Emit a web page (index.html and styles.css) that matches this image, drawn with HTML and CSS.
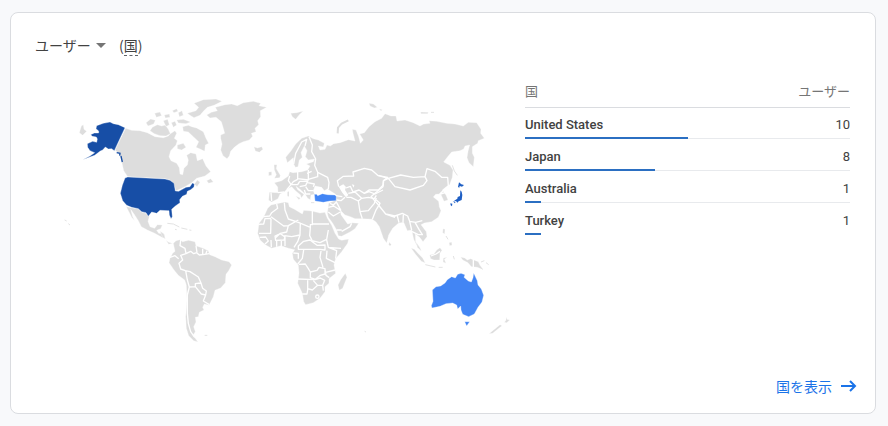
FILE: index.html
```
<!DOCTYPE html>
<html lang="ja">
<head>
    <meta charset="utf-8">
    <title>ユーザー（国）</title>
    <link rel="stylesheet" href="styles.css">
</head>
<body>
<main class="card">
    <header class="card-header">
        <span class="metric">
            <select class="metric-select" aria-label="ユーザー">
                <option>ユーザー</option>
            </select>
            <svg class="caret" viewBox="0 0 10 5" aria-hidden="true"><path d="M0 0h10L5 5z"/></svg>
        </span>
        <h1 class="dimension">(<span class="dimension-name">国</span>)</h1>
    </header>

    <div class="content">
        <svg class="map" viewBox="180 270 1380 780" aria-hidden="true">
            <!-- North America -->
            <g transform="translate(180 270)">
                <path class="land" d="M197 115L215 121 240 122 262 128 285 140 310 143 325 138 330 132 345 122 350 130 343 145 352 152 348 165 332 182 327 200 333 212 350 220 358 233 360 252 368 254 372 235 382 225 385 210 380 196 392 188 408 192 412 212 428 206 438 228 452 245 435 258 410 265 395 278 375 290 347 303 343 287 332 271 315 266 203 260 191 242 184 210 175 190 165 180Z"/>
                <path class="land" d="M277 112L292 104 305 108 316 105 325 118 331 131 318 138 300 137 283 131 270 122ZM258 98L272 87 286 91 281 102 264 108ZM284 70L300 66 305 77 289 82ZM313 75L328 72 330 82 316 84ZM310 92L323 88 328 104 318 110ZM334 98L345 94 350 105 340 112ZM355 68L366 62 370 76 358 80ZM350 90L370 88 392 96 378 101 355 99ZM337 62L350 56 354 64 342 68Z"/>
                <path class="land" d="M402 40L430 29 468 27 486 34 462 46 442 52 430 64 420 76 402 83 390 76 382 70 408 62 416 52ZM368 110L385 106 395 110 410 114 430 125 438 145 446 160 436 165 434 184 422 178 408 172 416 155 400 140 385 126 370 124ZM352 165L370 160 378 172 365 180 352 176Z"/>
                <path class="land" d="M403 282L412 270 420 277 411 290ZM440 272L452 266 460 276 446 280Z"/>
                <path class="land" d="M58 128L64 108 70 104 72 118 80 124 68 136ZM199 350L215 353 235 357 245 366 258 370 268 380 264 394 270 410 284 415 292 404 307 405 302 416 290 421 296 430 312 431 316 446 304 441 284 430 262 420 244 410 235 392 222 372 212 358 218 380 224 392 215 382Z"/>
                <path class="line-land" d="M322 400L340 402 358 411M364 414L382 418M388 420L394 421M345 418L350 419M14 390L20 393M25 401L30 405"/>
                <path class="land us" d="M110 107L130 100 150 96 160 101 175 104 195 113 163 182 155 176 145 177 136 171 128 180 121 183 104 196 68 209 90 198 104 188 90 182 83 172 82 161 98 154 110 157 112 147 109 141 97 139 92 134 103 129 116 129 116 123 108 116Z"/>
                <path class="land us" d="M203 261L315 267 330 271 342 280 346 303 356 304 378 292 390 290 397 279 403 282 402 291 392 299 382 304 380 313 367 319 359 329 360 338 346 348 335 358 337 380 333 386 328 375 327 362 300 361 290 370 275 366 265 379 258 368 245 365 235 356 215 352 200 346 188 332 181 310 187 286 195 264Z"/>
                <path class="line-us" d="M170 188L180 190 179 197M183 198L187 216"/>
            </g>

            <!-- Greenland and Iceland -->
            <g transform="translate(570 270)">
                <path class="land" d="M50 75L64 67 82 62 76 52 105 44 125 42 142 47 160 38 190 34 212 40 207 47 230 52 211 62 212 80 203 92 206 104 195 115 198 125 184 130 188 139 178 150 160 155 147 161 133 172 122 184 118 198 111 206 99 197 92 180 96 162 92 145 92 135 104 130 100 115 94 95 78 82 60 84ZM192 170L202 174 215 170 219 178 208 187 196 183Z"/>
            </g>

            <!-- South America -->
            <g transform="translate(480 660)">
                <path class="land" d="M40 70L48 62 60 59 68 65 85 61 105 65 108 77 130 85 145 92 149 104 165 110 185 120 207 125 215 135 206 152 198 163 196 188 182 204 165 211 160 230 147 256 133 252 128 262 132 270 118 277 115 290 106 292 108 306 101 320 106 335 99 346 114 366 101 362 86 347 79 325 77 290 81 240 79 195 74 180 55 166 42 150 27 128 30 115 38 100 45 94 42 80ZM0 33L12 42 15 56 8 52ZM18 61L26 67 38 70 26 73Z"/>
                <path class="border" d="M62 60L60 77 75 85 78 101 62 106 68 120 57 130 62 147 76 152 90 155 115 171 123 189 128 205 139 213 137 225 124 222 106 200 88 201 82 180 77 152M30 112L45 107 56 116M106 200L106 191 122 189M137 225L130 243 148 254M88 201L82 225 82 280 85 310 92 335 104 352M78 101L92 94 101 101 110 98 118 105 134 103 148 101M108 77L111 98M128 86L128 103M141 92L137 103"/>
                <path class="line-land" d="M134 346L142 346"/>
            </g>

            <!-- Africa -->
            <g transform="translate(735 570)">
                <path class="land" d="M68 55L78 45 95 41 120 36 130 38 133 50 147 57 162 66 172 72 176 61 201 63 225 69 240 67 247 85 260 106 270 130 281 147 290 151 311 147 308 160 290 185 272 206 267 225 272 250 252 266 252 280 240 290 240 305 225 325 205 338 182 344 176 335 172 310 158 280 162 250 160 225 145 208 142 190 149 179 130 175 108 167 80 175 62 165 45 150 38 130 42 100 55 83ZM301 250L306 262 293 295 283 301 279 285 287 269Z"/>
                <path class="border" d="M95 42L98 55 80 68 74 78 56 80M40 103L56 102 60 86 78 85M78 86L77 130 42 130M78 80L116 108 130 107 160 90M118 38L120 60 130 87 160 97 196 112V104H202V62M202 102H252M166 98L165 135M196 112L194 137 201 151M130 107L125 126 106 130 90 145M118 137L140 140 165 135 158 155 147 172M90 138L106 131 120 141 117 150 92 151ZM78 150L79 172M95 152V170M109 151V168M120 141V168M44 142L62 141 70 153 60 162M160 168L176 154 195 150 216 166 240 165 240 180 224 178H176L160 178ZM201 152L225 158 245 148 250 120M245 150L250 172 288 175M250 172L275 182 272 206M246 182L244 205 270 218M176 180L172 205 158 222M145 189L160 190 160 206M228 183L225 202 234 232M162 223L181 222 190 236 196 246 216 241 222 232 240 236 240 252 226 256 211 268 196 263 196 246M158 267L210 269 226 264 239 271 233 286 218 286 205 272M188 270V300M188 296L202 300 218 286M172 312L186 312 188 300M233 286L235 302M240 238L243 256 253 263M242 247L270 240"/>
                <circle class="border" cx="217" cy="320" r="5"/>
            </g>

            <!-- Europe and Asia -->
            <g transform="translate(795 270)">
                <path class="land" d="M130 138L145 146 160 150 178 160 175 171 160 168 165 180 180 178 186 165 196 168 206 161 225 158 250 149 270 153 264 130 262 118 273 120 281 140 286 160 295 150 284 132 298 128 312 110 330 95 350 85 360 71 378 78 393 78 396 93 420 90 445 98 465 108 476 102 495 100 492 92 515 94 545 100 570 102 595 108 610 97 635 98 648 118 647 130 658 145 640 152 638 160 622 170 622 190 628 202 625 230 612 218 606 203 609 184 614 165 600 168 596 177 585 182 560 186 548 200 536 216 555 226 564 240 562 262 554 284 543 291 532 300 543 315 549 330 537 334 527 312 512 313 505 321 521 334 523 350 528 362 520 382 500 395 478 399 468 404 484 425 486 440 474 455 464 442 451 432 452 455 467 476 459 474 446 448 440 420 427 422 416 397 400 400 383 415 371 435 365 459 355 445 343 410 333 396 322 388 290 386 270 386 256 380 240 375 226 361 228 374 248 402 262 398 281 400 270 416 255 426 230 439 220 437 215 420 202 398 190 382 187 370 191 340 213 330 212 313 195 302 188 296 178 302 170 292 150 288 145 302 149 313 138 315 136 329 128 325 120 312 105 298 93 289 98 299 117 313 109 324 106 314 92 303 80 290 65 298 59 305 45 312 39 326 20 336 11 331 13 307 39 308 38 291 28 278 50 272 70 258 74 245 84 248 110 245 128 240 135 228 124 222 145 215 149 207 130 210 121 200 126 182 118 168 108 188 112 202 103 210 99 230 91 232 86 222 85 203 67 218 62 202 77 184 92 162 110 145Z"/>
                <path class="sea" d="M221 290L235 283 243 291 240 300 250 315 243 322 232 308ZM260 283L268 285 266 293Z"/>
                <path class="border" d="M132 140L142 165 140 185 152 207 149 226 158 247 188 262 192 278 190 297M86 222L92 190 110 156 125 148 120 168M74 258L70 272 78 284 66 298M98 245V266L130 270V240M98 268L85 275 78 284 98 284 104 274M104 274L128 274 122 286 104 290M130 268L158 260 158 247M126 250L140 244M128 278L148 282 145 290M122 290L130 302 146 302M118 300L122 312 136 312M39 308L58 306M18 308L20 333"/>
                <path class="border" d="M221 290L217 272 235 259 266 258 264 246 298 235 320 240 338 256 368 262 355 272 354 286 340 300 312 300 298 310 282 300 264 306 256 289 243 294M250 310L270 306 290 325 280 333 258 322 244 322M298 310L312 305 330 312 354 300M290 325L310 322 328 326 334 316M212 317L232 320M215 330L228 332 240 322M213 334L228 362M195 340L205 345 215 335M190 352L206 348 228 362M190 366L205 378 226 366M230 420L215 420M230 424L255 410 260 400M280 333L285 365 292 386M285 365L310 362 328 340 334 324M322 388L332 362 345 340 334 330"/>
                <path class="border" d="M338 256L370 265 407 255 445 262 480 260 486 236 510 244 530 262 548 262 550 288 524 312M370 265L390 290 435 300 475 286 486 272 480 260M370 265L356 272 354 290 330 310 318 320 338 342 362 372 390 378 412 370 428 378 434 394 452 397 472 392M362 372L390 382M397 378L402 398M415 374L414 397M434 394L440 420M450 397L462 418 472 434M440 424L460 434 474 434M527 312L540 308"/>
                <path class="land" d="M27 224L36 224 34 236 46 256 44 263 28 265 34 254 28 240ZM11 246L20 245 20 256 11 257ZM77 70L95 68 115 63 103 74 92 88 82 80ZM312 40L325 42 337 52 328 54 315 48ZM342 56L352 59 348 63ZM467 66L490 67 488 71 468 71ZM92 318L106 324 102 329ZM67 306L72 304 72 320 67 318Z"/>
                <path class="thick-land" d="M218 130L219 113 230 101 250 91"/>
                <path class="line-land" d="M562 226L568 243 577 256M498 67L507 67M138 338L148 338"/>
                <path class="land tr" d="M148 313L155 313 158 317 172 311 188 314 210 315 214 320 213 332 195 333 175 337 150 333Z"/>
            </g>

            <!-- Japan -->
            <g class="jp" transform="translate(1110 270)">
                <path d="M267 277L274 283 282 285 276 290 269 288 268 293 264 291ZM271 301L275 305 277 315 275 330 266 334 262 338 258 333 248 336 256 330 262 326 263 321 270 318ZM241 340L247 341 246 349 242 346ZM251 337L257 336 254 340Z"/>
            </g>

            <!-- South-east Asia and Oceania -->
            <g transform="translate(1080 540)">
                <path class="land" d="M153 204L163 208 176 222 188 234 196 249 184 244 166 222ZM209 225L222 222 230 210 240 203 246 211 240 220 239 240 222 240 212 236ZM250 234L262 232 253 238 258 250 249 246ZM249 146L255 148 254 162 248 158ZM267 188L275 186 276 196 269 197ZM88 186L94 194 90 198 86 194ZM170 188L182 208 184 214 172 202ZM302 231L314 234 322 240 332 236 355 245 360 256 371 270 352 262 334 260 324 248 308 240Z"/>
                <path class="border" d="M340 232V266M213 228L228 222 240 214"/>
                <path class="line-land" d="M196 254L226 261M236 262L248 262M280 228L283 238M363 246L373 242M378 248L386 254M258 168L264 178M14 454L18 456"/>
                <path class="land au" d="M217 330L228 320 242 318 255 309 262 299 275 290 286 294 293 283 303 280 315 284 312 292 325 303 334 306 339 293 341 279 347 292 352 302 354 315 364 327 371 346 366 366 354 382 343 402 326 410 308 403 303 390 302 378 293 387 290 375 278 369 258 371 240 379 216 384 214 377 219 364ZM314 425L329 425 320 438Z"/>
                <path class="land" d="M438 411L441 418 449 420 440 428 433 427 438 421ZM420 434L426 437 398 460 387 461Z"/>
            </g>
        </svg>

        <table class="countries">
            <thead>
                <tr><th scope="col">国</th><th scope="col" class="value">ユーザー</th></tr>
            </thead>
            <tbody>
                <tr><th scope="row">United States<span class="bar" style="width: 50%"></span></th><td class="value">10</td></tr>
                <tr><th scope="row">Japan<span class="bar" style="width: 40%"></span></th><td class="value">8</td></tr>
                <tr><th scope="row">Australia<span class="bar" style="width: 5%"></span></th><td class="value">1</td></tr>
                <tr><th scope="row">Turkey<span class="bar" style="width: 5%"></span></th><td class="value">1</td></tr>
            </tbody>
        </table>
    </div>

    <footer class="card-footer">
        <a class="more" href="#">国を表示
            <svg class="arrow" viewBox="0 0 16 14" aria-hidden="true"><path d="M0 7h14M9 2l5 5-5 5"/></svg>
        </a>
    </footer>
</main>
</body>
</html>
```

FILE: styles.css
```
* {
	box-sizing: border-box;
}

body {
	margin: 12px 12px 12px 10px;
	background-color: #f8f9fb;
	color: #424242;
	font-family: Roboto, "Noto Sans CJK JP", sans-serif;
	font-size: 14px;
}

.card {
	padding: 16px 18px 15px 16px;
	background-color: #fff;
	border: 1px solid #dadce0;
	border-radius: 8px;
}

.card-header {
	display: flex;
	align-items: center;
	gap: 13px;
	height: 32px;
	padding: 0 8px;
	font-family: "Noto Sans CJK JP", sans-serif;
}

.metric {
	display: grid;
	align-items: center;
}

.metric-select {
	grid-area: 1 / 1;
	appearance: none;
	padding: 0 15px 0 0;
	border: none;
	background: none;
	color: inherit;
	font: inherit;
	cursor: pointer;
}

.caret {
	grid-area: 1 / 1;
	justify-self: end;
	width: 10px;
	height: 5px;
	fill: #757575;
	pointer-events: none;
}

.dimension {
	margin: 0;
	font-size: 14px;
	font-weight: normal;
	line-height: 20px;
}

.dimension-name {
	display: inline-block;
	border-bottom: 1px dashed #5f6368;
}

.content {
	display: grid;
	grid-template-columns: 1fr 325px;
	align-items: start;
	margin-top: 15px;
	padding: 0 7px 0 8px;
}

.map {
	width: 100%;
	margin-top: 14px;
	padding: 0 5px 0 25px;
}

.land {
	fill: #ddd;
	stroke: #fff;
	stroke-width: 1;
}

.sea {
	fill: #fff;
}

.border {
	fill: none;
	stroke: #fff;
	stroke-width: 4;
	stroke-linejoin: round;
}

.line-land,
.thick-land {
	fill: none;
	stroke: #e3e3e3;
	stroke-width: 3;
}

.thick-land {
	stroke: #ddd;
	stroke-width: 6;
}

.us {
	fill: #174ea6;
}

.line-us {
	fill: none;
	stroke: #174ea6;
	stroke-width: 4;
}

.au,
.tr {
	fill: #4285f4;
}

.jp {
	fill: #1f5fc4;
}

.countries {
	width: 100%;
	border-spacing: 0;
	font-size: 13px;
}

.countries th,
.countries td {
	height: 32px;
	padding: 3px 0 0;
	border-bottom: 1px solid #e8eaed;
	text-align: left;
}

.countries thead th {
	padding: 0 0 2px;
	border-color: #dadce0;
	color: #757575;
	font-weight: normal;
}

.countries tbody th {
	font-weight: 500;
}

.countries .value {
	text-align: right;
}

.countries tbody tr {
	position: relative;
}

.countries tbody tr:first-child > * {
	height: 31px;
}

.countries tbody tr:last-child > * {
	border-color: transparent;
}

.bar {
	position: absolute;
	left: 0;
	bottom: 0;
	height: 2px;
	background-color: #2b6fc2;
}

.card-footer {
	display: flex;
	justify-content: flex-end;
	margin-top: 24px;
}

.more {
	display: flex;
	align-items: center;
	gap: 9px;
	height: 24px;
	color: #1a73e8;
	text-decoration: none;
}

.arrow {
	width: 16px;
	height: 14px;
	fill: none;
	stroke: #1a73e8;
	stroke-width: 2;
}
```
